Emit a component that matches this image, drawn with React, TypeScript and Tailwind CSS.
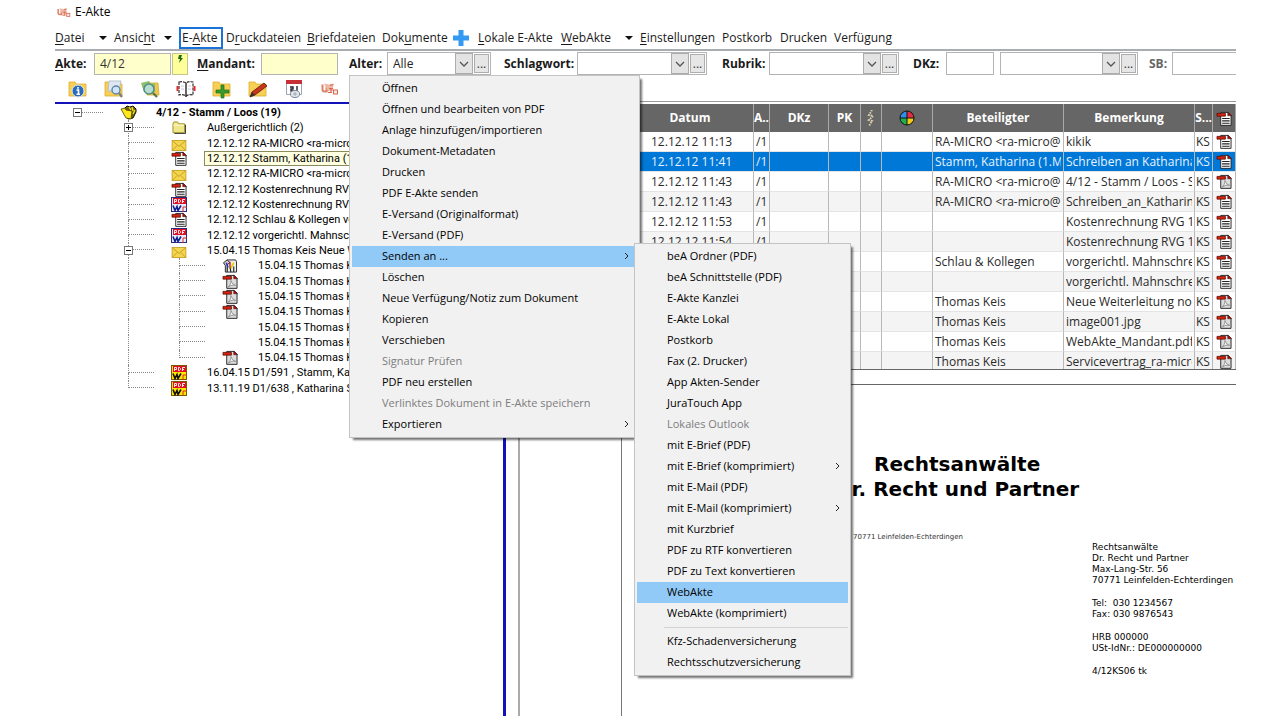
import type { ReactNode } from 'react'
import clsx from 'clsx'

/* ---------- icons ---------- */

const Logo = ({ className }: { className: string }) => (
  <svg viewBox="0 0 18 13" className={className}>
    <path d="M1.500 2v5q0 2 2 2h2V4M6 9V5q1-2 3-1.500" fill="none" stroke="#dc8068" strokeWidth="2" />
    <path d="M3 1l5 1 5-1-1 4 1 4-4-1-2 1z" fill="#efb8a6" />
    <path d="M9 3l3-1M8 6h4M10 6v4M7 10h4" stroke="#d5694f" strokeWidth="1.200" />
    <rect x="12.500" y="7.500" width="4" height="4" fill="#fbe6e0" stroke="#d5694f" />
  </svg>
)

const DocIcon = ({ acrobat = false }: { acrobat?: boolean }) => (
  <svg viewBox="0 0 16 16" className="h-[15px] w-4 shrink-0">
    <path d="M4.500 1.500h8l3 3v10.800h-11z" fill={acrobat ? '#dcdcdc' : '#fff'} stroke="#222" />
    <path d="M12 1l4 4h-4z" fill="#c00" stroke="#222" strokeWidth=".6" />
    {acrobat
      ? <path d="M6 14c2-2 3-4 3-7 1 3 3 5 5 5-3-.5-5 0-8 2z" fill="#f8f8f8" stroke="#888" strokeWidth=".9" />
      : <path d="M6 8h8M6 10.500h8M6 13h8" stroke="#222" strokeWidth="1.200" />}
    <path d="M.5 2.500h9v3h-9z" fill="#d8200c" stroke="#5a0a00" strokeWidth=".8" />
  </svg>
)

const MailIcon = () => (
  <svg viewBox="0 0 16 12" className="mt-1 h-[11px] w-4 shrink-0">
    <rect x=".5" y=".5" width="15" height="11" fill="#f3d64e" stroke="#c9a227" />
    <path d="M1 1l7 6 7-6M1 11l5-5M15 11l-5-5" fill="none" stroke="#b88d1c" strokeWidth=".8" />
  </svg>
)

const FolderIcon = () => (
  <svg viewBox="0 0 16 14" className="h-[13px] w-4 shrink-0">
    <path d="M1.500 3l1-2h4l1 2h6.500v9.500H1.500z" fill="#f0e68c" stroke="#9a8c20" />
    <path d="M15 4v9.500H3" fill="none" stroke="#333" />
    <path d="M2 4.500h11" stroke="#fffde0" />
  </svg>
)

const OpenFolderIcon = () => (
  <svg viewBox="0 0 18 15" className="h-[15px] w-[18px] shrink-0">
    <path d="M4 4l3-3 3 1 3-1 3 3v3l-3 6-5 1z" fill="#6b6410" stroke="#111" />
    <path d="M1 4l4-1 1 2 6 1-1 8-5-1z" fill="#ffe81a" stroke="#4a4200" strokeWidth=".8" />
    <path d="M9 2l2 3M12 2l1 4M15 5l-2 4" stroke="#ffe81a" strokeWidth="1.200" />
  </svg>
)

const PdfWordIcon = ({ yellow = false }: { yellow?: boolean }) => (
  <svg viewBox="0 0 16 15" className="h-[15px] w-4 shrink-0">
    <rect x=".5" y=".5" width="15" height="14" fill={yellow ? '#ffe600' : '#e8ebff'} stroke={yellow ? '#7a5a00' : '#2a2a80'} />
    <rect x="2" y="1" width="13" height="6" fill="#e01020" />
    <path d="M3.500 6V2.500H5.500V4.500H3.500M7.500 2.500V5.500H8.500L9.500 4.500V3.500L8.500 2.500zM11.500 6V2.500H14M11.500 4.500H13" fill="none" stroke="#fff" strokeWidth=".9" />
    <path d="M2 8.500l2 5 2-4 1 4 3-5" fill="none" stroke={yellow ? '#111' : '#10208c'} strokeWidth="1.600" />
    <path d="M12 15v-5h4" fill="none" stroke="#d03020" strokeWidth="1" />
  </svg>
)

const PaintIcon = () => (
  <svg viewBox="0 0 16 15" className="h-[14px] w-4 shrink-0">
    <path d="M5 1h9l1 2v11H5z" fill="#eee" stroke="#222" />
    <path d="M1 4l4-3 3 3-3 2v8H3V7z" fill="#ccc" stroke="#222" />
    <path d="M4 4l2 5" stroke="#2038d0" strokeWidth="1.500" />
    <path d="M8 3v6" stroke="#d01818" strokeWidth="1.500" />
    <path d="M12 4l-3 6" stroke="#e6cf00" strokeWidth="1.800" />
    <path d="M8 9l1 5M12 8v6" stroke="#222" strokeWidth="1.200" />
  </svg>
)

const folder = <path d="M1 3h6l1 2h10v12H1z" fill="#f7cf55" stroke="#e0ad2c" strokeWidth=".8" />

const Tool = ({ children, label }: { children: ReactNode; label: string }) => (
  <button type="button" aria-label={label} className="flex h-full w-9 items-center justify-center">
    <svg viewBox="0 0 20 20" className="h-5 w-5">{children}</svg>
  </button>
)

const Chevron = () => (
  <svg viewBox="0 0 10 6" className="h-[6px] w-[10px]">
    <path d="M1 1l4 4 4-4" fill="none" stroke="#555" strokeWidth="1.300" />
  </svg>
)

const Caret = () => (
  <svg viewBox="0 0 8 4" className="mr-[7px] h-1 w-2 shrink-0"><path d="M0 0h8L4 4z" fill="#111" /></svg>
)

/* ---------- menu bar ---------- */

function Hot({ text, at }: { text: string; at: number }) {
  if (at < 0) return <span>{text}</span>
  return (
    <span>
      {text.slice(0, at)}<span className="underline underline-offset-2">{text[at]}</span>{text.slice(at + 1)}
    </span>
  )
}

const BAR: { text: string; at: number; caret?: boolean; active?: boolean; plus?: boolean }[] = [
  { text: 'Datei', at: 0, caret: true },
  { text: 'Ansicht', at: 5, caret: true },
  { text: 'E-Akte', at: 2, active: true },
  { text: 'Druckdateien', at: 1 },
  { text: 'Briefdateien', at: 0 },
  { text: 'Dokumente', at: 3 },
  { text: '', at: -1, plus: true },
  { text: 'Lokale E-Akte', at: 0 },
  { text: 'WebAkte', at: 0, caret: true },
  { text: 'Einstellungen', at: 0 },
  { text: 'Postkorb', at: -1 },
  { text: 'Drucken', at: -1 },
  { text: 'Verfügung', at: -1 },
]

function MenuBar() {
  return (
    <nav className="grid h-[27px] grid-cols-[59px_65px_47px_81px_75px_71px_25px_83px_79px_82px_58px_54px_1fr] items-center border-b-2 border-[#a9adb2] pt-[3px]">
      {BAR.map((b, i) => b.plus ? (
        <button key={i} type="button" aria-label="Neu">
          <svg viewBox="0 0 16 16" className="h-4 w-4"><path d="M5.500 0h5v5.500H16v5h-5.500V16h-5v-5.500H0v-5h5.500z" fill="#3399f3" /></svg>
        </button>
      ) : (
        <button
          key={i}
          type="button"
          className={clsx(
            'flex items-center justify-between whitespace-nowrap text-left',
            b.active && 'h-[22px] w-11 border-2 border-[#1a73d9] pl-px',
          )}
        >
          <Hot text={b.text} at={b.at} />
          {b.caret && <Caret />}
        </button>
      ))}
    </nav>
  )
}

/* ---------- filter row ---------- */

function Combo({ id, value = '', className, label }: { id: string; value?: string; className: string; label?: string }) {
  return (
    <div className={clsx('flex h-[23px] border border-[#b4b4b4] bg-white', className)}>
      <div className="relative flex min-w-0 flex-1">
        <select id={id} aria-label={label} className="w-full appearance-none bg-white pl-[5px] text-[#222] outline-none">
          <option>{value}</option>
        </select>
        <span className="pointer-events-none absolute inset-y-0 right-0 flex w-[18px] items-center justify-center border border-[#adadad] bg-[#e3e3e3]">
          <Chevron />
        </span>
      </div>
      <button type="button" className="m-px flex w-[15px] items-end justify-center border border-[#adadad] bg-[#e6e6e6] leading-4 text-[#333]">...</button>
    </div>
  )
}

function Filters() {
  const input = 'border border-[#b4b4b4] pl-[5px] text-[#333] outline-none'
  return (
    <form className="grid h-[25px] grid-cols-[142px_152px_155px_218px_191px_87px_149px_1fr] items-center overflow-hidden font-bold">
      <div className="flex items-center">
        <label htmlFor="akte" className="w-[39px]"><Hot text="Akte:" at={0} /></label>
        <input id="akte" defaultValue="4/12" className={clsx(input, 'h-[22px] w-[77px] bg-[#ffffcc] font-normal')} />
        <button type="button" aria-label="Akte wählen" className="ml-px flex h-[22px] w-4 justify-center border border-[#c4c48c] bg-[#ffff99]">
          <svg viewBox="0 0 8 10" className="h-[10px] w-2"><path d="M3 1h3L5 4h2L3 9l1-4H2z" fill="#1d6b14" /></svg>
        </button>
      </div>
      <div className="flex items-center">
        <label htmlFor="mandant" className="w-16"><Hot text="Mandant:" at={0} /></label>
        <input id="mandant" className={clsx(input, 'h-[22px] w-[77px] bg-[#ffffcc] font-normal')} />
      </div>
      <div className="flex items-center">
        <label htmlFor="alter" className="w-[38px]">Alter:</label>
        <Combo id="alter" value="Alle" className="w-[104px] font-normal" />
      </div>
      <div className="flex items-center">
        <label htmlFor="schlagwort" className="w-[73px]">Schlagwort:</label>
        <Combo id="schlagwort" className="w-[130px] font-normal" />
      </div>
      <div className="flex items-center">
        <label htmlFor="rubrik" className="w-[47px]">Rubrik:</label>
        <Combo id="rubrik" className="w-[130px] font-normal" />
      </div>
      <div className="flex items-center">
        <label htmlFor="dkz" className="w-[33px]">DKz:</label>
        <input id="dkz" className={clsx(input, 'h-[23px] w-12 font-normal')} />
      </div>
      <Combo id="dkz-liste" label="DKz Liste" className="w-[138px] font-normal" />
      <div className="flex items-center">
        <label htmlFor="sb" className="w-[23px] shrink-0 text-[#666]">SB:</label>
        <input id="sb" className={clsx(input, 'h-[23px] w-full min-w-0 border-r-0 font-normal')} />
      </div>
    </form>
  )
}

function Toolbar() {
  return (
    <div className="flex h-[25px] items-center pl-[5px]">
      <Tool label="Info">
        {folder}
        <circle cx="10" cy="12" r="6" fill="#2b6cb8" stroke="#dbe9f7" />
        <path d="M10 8v1.800M8.500 11H10.500V15M8.500 15.300h3.500" stroke="#fff" strokeWidth="1.600" fill="none" />
      </Tool>
      <Tool label="Suche im Ordner">
        {folder}
        <path d="M5 2h12l-2 10H4z" fill="#dfe8f0" stroke="#b8c2cc" />
        <circle cx="12" cy="11" r="4" fill="#cfe6f7" stroke="#5f86a5" strokeWidth="1.400" />
        <path d="M15 14l3 4" stroke="#6f7f8c" strokeWidth="2.200" />
      </Tool>
      <Tool label="Suche">
        <path d="M6 4h12l1 12H7z" fill="#f0c850" stroke="#d9a92c" strokeWidth=".8" />
        <path d="M1 4l8-2 2 3 4-1v9H4z" fill="#8bbf6a" />
        <circle cx="9" cy="10" r="5" fill="#b8dccf" stroke="#4f8f86" strokeWidth="1.500" />
        <path d="M13 14l4 4" stroke="#5c7a50" strokeWidth="2.400" />
      </Tool>
      <Tool label="Adressbuch">
        <path d="M3 3q4-1 7 1 3-2 7-1v13q-4-1-7 1-3-2-7-1z" fill="#fff" stroke="#333" strokeWidth="1.200" strokeDasharray="3 1" />
        <path d="M10 4v14" stroke="#333" strokeWidth="1.500" />
        <path d="M1.500 7v5M18.500 7v5" stroke="#e02a2a" strokeWidth="2" />
        <path d="M5 7h3M5 10h3M12 7h3M12 10h3" stroke="#ccd" />
      </Tool>
      <Tool label="Neu anlegen">
        {folder}
        <path d="M9 6h3v5h5v3h-5v5H9v-5H4v-3h5z" fill="#3a9a2c" stroke="#23701b" strokeWidth=".7" />
      </Tool>
      <Tool label="Bearbeiten">
        {folder}
        <path d="M2 18l2-5L16 4l3 3L7 16z" fill="#c8341e" stroke="#5c1a0e" strokeWidth=".8" />
        <path d="M2 18l2-5 3 3z" fill="#333" />
      </Tool>
      <Tool label="Kalender">
        <path d="M2.500 1.500h15v14h-15z" fill="#fff" stroke="#9aa4b4" />
        <path d="M2 1h16v4H2z" fill="#c62f35" />
        <path d="M6 8h3v2H7v2h3M13 7v5" fill="none" stroke="#223" strokeWidth="1.400" />
        <ellipse cx="11" cy="15" rx="4.500" ry="3.500" fill="#e4e8ee" stroke="#7a8797" />
        <path d="M9 15h4M11 13v4" fill="none" stroke="#9aa" />
      </Tool>
      <button type="button" aria-label="RA-MICRO" className="flex w-9 justify-center"><Logo className="h-[14px] w-[18px]" /></button>
    </div>
  )
}

/* ---------- document tree ---------- */

type Kind = 'open' | 'folder' | 'mail' | 'doc' | 'pdf' | 'word' | 'wordY' | 'paint' | 'none'
type Node = { level: number; text: string; icon: Kind; box?: '+' | '-'; last?: boolean; selected?: boolean }

const TREE: Node[] = [
  { level: 0, text: '4/12 - Stamm / Loos (19)', icon: 'open', box: '-', last: true },
  { level: 1, text: 'Außergerichtlich (2)', icon: 'folder', box: '+' },
  { level: 1, text: '12.12.12 RA-MICRO <ra-micro@ra-micro.de>', icon: 'mail' },
  { level: 1, text: '12.12.12 Stamm, Katharina (1.Mandant)', icon: 'doc', selected: true },
  { level: 1, text: '12.12.12 RA-MICRO <ra-micro@ra-micro.de>', icon: 'mail' },
  { level: 1, text: '12.12.12 Kostenrechnung RVG 1', icon: 'doc' },
  { level: 1, text: '12.12.12 Kostenrechnung RVG 1', icon: 'word' },
  { level: 1, text: '12.12.12 Schlau & Kollegen vorgerichtl.', icon: 'doc' },
  { level: 1, text: '12.12.12 vorgerichtl. Mahnschreiben', icon: 'word' },
  { level: 1, text: '15.04.15 Thomas Keis Neue Weiterleitung', icon: 'mail', box: '-' },
  { level: 2, text: '15.04.15 Thomas Keis', icon: 'paint' },
  { level: 2, text: '15.04.15 Thomas Keis', icon: 'pdf' },
  { level: 2, text: '15.04.15 Thomas Keis', icon: 'pdf' },
  { level: 2, text: '15.04.15 Thomas Keis', icon: 'pdf' },
  { level: 2, text: '15.04.15 Thomas Keis', icon: 'none' },
  { level: 2, text: '15.04.15 Thomas Keis', icon: 'none' },
  { level: 2, text: '15.04.15 Thomas Keis', icon: 'pdf', last: true },
  { level: 1, text: '16.04.15 D1/591 , Stamm, Katharina', icon: 'wordY' },
  { level: 1, text: '13.11.19 D1/638 , Katharina Stamm', icon: 'wordY', last: true },
]

const TREE_ICONS: Record<Kind, ReactNode> = {
  open: <OpenFolderIcon />,
  folder: <FolderIcon />,
  mail: <MailIcon />,
  doc: <DocIcon />,
  pdf: <DocIcon acrobat />,
  word: <PdfWordIcon />,
  wordY: <PdfWordIcon yellow />,
  paint: <PaintIcon />,
  none: null,
}

function Connector({ node }: { node: Node }) {
  return (
    <span className="relative grid w-[51px] shrink-0 grid-rows-2">
      <span className={clsx('w-[26px] border-b border-dotted border-[#888]', node.level > 0 && 'border-l')} />
      <span className={clsx('w-[26px] border-dotted border-[#888]', !node.last && 'border-l')} />
      {node.box && (
        <span className="absolute -left-1 top-[3px] flex h-[9px] w-[9px] items-center justify-center border border-[#777] bg-white">
          <svg viewBox="0 0 5 5" className="h-[5px] w-[5px]">
            <path d={node.box === '+' ? 'M0 2.500h5M2.500 0v5' : 'M0 2.500h5'} stroke="#000" />
          </svg>
        </span>
      )}
    </span>
  )
}

function Tree() {
  return (
    <ul className="flex h-[291px] flex-col pl-[22px] font-[Roboto,sans-serif] text-[11px] leading-[13px] text-black">
      {TREE.map((n, i) => (
        <li key={i} className="flex min-h-0 flex-1 items-stretch whitespace-nowrap">
          {n.level > 0 && <span className="w-[51px] shrink-0" />}
          {n.level > 1 && <span className="w-[51px] shrink-0 border-l border-dotted border-[#888]" />}
          <Connector node={n} />
          <span className="-ml-2 flex w-[33px] shrink-0 items-center">{TREE_ICONS[n.icon]}</span>
          <span
            className={clsx(
              'flex items-center border px-[2px]',
              n.selected ? 'border-[#8a8a5c] bg-[#ffffe1]' : 'border-transparent',
              n.level === 0 && 'font-bold',
            )}
          >
            {n.text}
          </span>
        </li>
      ))}
    </ul>
  )
}

/* ---------- document list ---------- */

const ROWS = [
  { date: '12.12.12 11:13', who: 'RA-MICRO <ra-micro@ra-micro.de>', note: 'kikik', pdf: false },
  { date: '12.12.12 11:41', who: 'Stamm, Katharina (1.Mandant)', note: 'Schreiben an Katharina', pdf: false },
  { date: '12.12.12 11:43', who: 'RA-MICRO <ra-micro@ra-micro.de>', note: '4/12 - Stamm / Loos - Schreiben', pdf: true },
  { date: '12.12.12 11:43', who: 'RA-MICRO <ra-micro@ra-micro.de>', note: 'Schreiben_an_Katharina', pdf: false },
  { date: '12.12.12 11:53', who: '', note: 'Kostenrechnung RVG 1', pdf: false },
  { date: '12.12.12 11:54', who: '', note: 'Kostenrechnung RVG 1', pdf: false },
  { date: '', who: 'Schlau & Kollegen', note: 'vorgerichtl. Mahnschreiben', pdf: false },
  { date: '', who: '', note: 'vorgerichtl. Mahnschreiben', pdf: false },
  { date: '', who: 'Thomas Keis', note: 'Neue Weiterleitung noch', pdf: true },
  { date: '', who: 'Thomas Keis', note: 'image001.jpg', pdf: true },
  { date: '', who: 'Thomas Keis', note: 'WebAkte_Mandant.pdf', pdf: true },
  { date: '', who: 'Thomas Keis', note: 'Servicevertrag_ra-micro', pdf: true },
]

function DocTable() {
  const th = 'border-r border-[#a8a8a8] p-0 text-center font-bold'
  const td = 'border-r border-b border-r-[#b8b8b8] border-b-[#e4e4e4] p-0'
  const clip = 'overflow-hidden whitespace-nowrap'
  return (
    <div className="h-[265px] overflow-hidden">
      <table className="w-full table-fixed border-separate border-spacing-0 text-[12px]">
        <colgroup>
          <col />
          <col className="w-[127px]" />
          <col className="w-4" />
          <col className="w-[59px]" />
          <col className="w-8" />
          <col className="w-[21px]" />
          <col className="w-[51px]" />
          <col className="w-[131px]" />
          <col className="w-[131px]" />
          <col className="w-[18px]" />
          <col className="w-[23px]" />
        </colgroup>
        <thead>
          <tr className="h-7 bg-[#666] text-white">
            <th className={th} />
            <th className={th}>Datum</th>
            <th className={th}><div className="flex justify-end overflow-hidden">A..</div></th>
            <th className={th}>DKz</th>
            <th className={th}>PK</th>
            <th className={th}>
              <svg viewBox="0 0 8 16" className="mx-auto h-4 w-2">
                <path d="M5 0L2 5l4 1-4 4 3 1-3 5" fill="none" stroke="#d9cfae" strokeWidth="2" strokeDasharray="1.500 1" />
              </svg>
            </th>
            <th className={th}>
              <svg viewBox="0 0 16 16" className="mx-auto h-4 w-4">
                <path d="M8 8V1a7 7 0 0 0-7 7z" fill="#2f8fe8" />
                <path d="M8 8V1a7 7 0 0 1 7 7z" fill="#e82a44" />
                <path d="M8 8v7a7 7 0 0 1-7-7z" fill="#20b050" />
                <path d="M8 8v7a7 7 0 0 0 7-7z" fill="#f0cc18" />
                <path d="M8 1v14M1 8h14" stroke="#111" />
                <circle cx="8" cy="8" r="7" fill="none" stroke="#111" />
              </svg>
            </th>
            <th className={th}>Beteiligter</th>
            <th className={th}>Bemerkung</th>
            <th className={th}><div className="flex justify-end overflow-hidden">S...</div></th>
            <th className={th}><div className="flex justify-center"><DocIcon /></div></th>
          </tr>
        </thead>
        <tbody>
          {ROWS.map((r, i) => (
            <tr
              key={i}
              className={clsx(
                'h-5 leading-[19px]',
                i === 1 ? 'bg-[#0078d7] text-[#e8f3ff]' : i % 2 ? 'bg-[#f4f4f4] text-[#2a2a2a]' : 'bg-white text-[#2a2a2a]',
              )}
            >
              <td className={td} />
              <td className={clsx(td, 'pl-6')}>{r.date}</td>
              <td className={clsx(td, 'pl-[2px]')}>{r.date && '/1'}</td>
              <td className={td} />
              <td className={td} />
              <td className={td} />
              <td className={td} />
              <td className={clsx(td, 'pl-[2px] pr-[2px]')}><div className={clip}>{r.who}</div></td>
              <td className={clsx(td, 'pl-[2px] pr-[2px]')}><div className={clip}>{r.note}</div></td>
              <td className={clsx(td, 'pl-px')}><div className={clip}>KS</div></td>
              <td className={td}><div className="flex justify-center"><DocIcon acrobat={r.pdf} /></div></td>
            </tr>
          ))}
        </tbody>
      </table>
    </div>
  )
}

/* ---------- letter preview ---------- */

const ADDRESS = [
  ['Rechtsanwälte', 'Dr. Recht und Partner', 'Max-Lang-Str. 56', '70771 Leinfelden-Echterdingen'],
  ['Tel:  030 1234567', 'Fax: 030 9876543'],
  ['HRB 000000', 'USt-IdNr.: DE000000000'],
  ['4/12KS06 tk'],
]

function Preview() {
  return (
    <div className="ml-3 flex flex-1 border-l-2 border-[#aaa]">
      <div className="w-[101px] shrink-0" />
      <article className="min-w-0 flex-1 overflow-hidden border-l border-[#777] pt-[67px] font-['DejaVu_Sans',sans-serif] text-black">
        <h1 className="ml-[213px] w-fit whitespace-nowrap text-center text-[20px] font-bold leading-[25px]">
          Rechtsanwälte<br />Dr. Recht und Partner
        </h1>
        <div className="mt-[30px] flex items-start">
          <p className="w-[341px] shrink-0 whitespace-nowrap text-right text-[7px] leading-[10px] text-[#333]">| 70771 Leinfelden-Echterdingen</p>
          <address className="ml-[129px] mt-[10px] whitespace-pre text-[9px] not-italic leading-[11px]">
            {ADDRESS.map((g, i) => (
              <div key={i} className="mb-3">
                {g.map(l => <p key={l}>{l}</p>)}
              </div>
            ))}
          </address>
        </div>
      </article>
    </div>
  )
}

/* ---------- popup menus ---------- */

type Item = { text: string; off?: boolean; sub?: boolean; hot?: boolean; rule?: boolean }

const CONTEXT: Item[] = [
  { text: 'Öffnen' },
  { text: 'Öffnen und bearbeiten von PDF' },
  { text: 'Anlage hinzufügen/importieren' },
  { text: 'Dokument-Metadaten' },
  { text: 'Drucken' },
  { text: 'PDF E-Akte senden' },
  { text: 'E-Versand (Originalformat)' },
  { text: 'E-Versand (PDF)' },
  { text: 'Senden an ...', sub: true, hot: true },
  { text: 'Löschen' },
  { text: 'Neue Verfügung/Notiz zum Dokument' },
  { text: 'Kopieren' },
  { text: 'Verschieben' },
  { text: 'Signatur Prüfen', off: true },
  { text: 'PDF neu erstellen' },
  { text: 'Verlinktes Dokument in E-Akte speichern', off: true },
  { text: 'Exportieren', sub: true },
]

const SEND_TO: Item[] = [
  { text: 'beA Ordner (PDF)' },
  { text: 'beA Schnittstelle (PDF)' },
  { text: 'E-Akte Kanzlei' },
  { text: 'E-Akte Lokal' },
  { text: 'Postkorb' },
  { text: 'Fax (2. Drucker)' },
  { text: 'App Akten-Sender' },
  { text: 'JuraTouch App' },
  { text: 'Lokales Outlook', off: true },
  { text: 'mit E-Brief (PDF)' },
  { text: 'mit E-Brief (komprimiert)', sub: true },
  { text: 'mit E-Mail (PDF)' },
  { text: 'mit E-Mail (komprimiert)', sub: true },
  { text: 'mit Kurzbrief' },
  { text: 'PDF zu RTF konvertieren' },
  { text: 'PDF zu Text konvertieren' },
  { text: 'WebAkte', hot: true },
  { text: 'WebAkte (komprimiert)' },
  { text: 'Kfz-Schadenversicherung', rule: true },
  { text: 'Rechtsschutzversicherung' },
]

function Popup({ items, className }: { items: Item[]; className: string }) {
  return (
    <ul role="menu" className={clsx('absolute border border-[#c4c4c4] bg-[#f1f1f1] p-[2px] text-[11px] text-black shadow-[3px_3px_2px_-1px_rgba(0,0,0,0.55)]', className)}>
      {items.map(it => (
        <li key={it.text} role="none">
          {it.rule && <hr className="my-[3px] ml-[27px] border-[#d4d4d4]" />}
          <button
            type="button"
            role="menuitem"
            disabled={it.off}
            className={clsx(
              'flex h-[21px] w-full items-center justify-between whitespace-nowrap pb-[2px] pl-[30px] pr-2 text-left',
              it.hot && 'bg-[#91c9f7]',
              it.off && 'text-[#7d7d7d]',
            )}
          >
            {it.text}
            {it.sub && <svg viewBox="0 0 5 8" className="h-2 w-[5px]"><path d="M1 1l3 3-3 3" fill="none" stroke="#222" /></svg>}
          </button>
        </li>
      ))}
    </ul>
  )
}

export default function App() {
  return (
    <div className="relative flex min-h-screen flex-col bg-white pb-1 pl-[55px] pr-11 font-['Open_Sans','Noto_Sans',sans-serif] text-[12px] leading-4 text-[#1a1a1a]">
      <header className="flex h-6 items-center gap-1 pl-[2px]">
        <Logo className="h-[11px] w-[14px]" />
        <span className="text-black">E-Akte</span>
      </header>
      <MenuBar />
      <Filters />
      <Toolbar />
      <main className="flex flex-1">
        <aside className="mt-px w-[451px] shrink-0 overflow-hidden border-r-[3px] border-t-2 border-[#1212b8] pt-px">
          <Tree />
        </aside>
        <section className="flex min-w-0 flex-1 flex-col border-t border-[#999] pt-[2px]">
          <DocTable />
          <div className="h-4 border-y border-[#666]" />
          <Preview />
        </section>
      </main>
      <Popup items={CONTEXT} className="left-[349px] top-[75px] w-[291px]" />
      <Popup items={SEND_TO} className="left-[634px] top-[243px] w-[217px]" />
    </div>
  )
}
